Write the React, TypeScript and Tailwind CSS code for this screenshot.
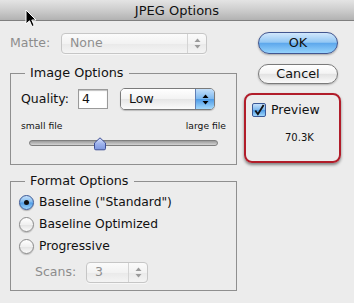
import React from 'react';

// small up/down stepper arrows used by popup menus
const Arrows = ({ color = '#000' }: { color?: string }) => (
    <svg width="7" height="11" viewBox="0 0 7 11">
        <path d="M3.5 0.5 L6.5 4 L0.5 4 Z" fill={color} />
        <path d="M3.5 10.5 L6.5 7 L0.5 7 Z" fill={color} />
    </svg>
);

const DisabledPopup = ({ value, width }: { value: string; width: string }) => (
    <div className={`${width} h-[21px] flex items-center rounded-[4px] border border-[#c6c6c6] bg-[linear-gradient(to_bottom,#fbfbfb_0%,#f2f2f2_50%,#e9e9e9_51%,#f4f4f4_100%)] shadow-[0_1px_0_rgba(255,255,255,0.6)]`}>
        <span className="flex-1 pl-[8px] text-[12.5px] leading-none text-[#8f8f8f]">{value}</span>
        <div className="w-[19px] h-full flex items-center justify-center border-l border-[#d4d4d4]">
            <Arrows color="#9a9a9a" />
        </div>
    </div>
);

const Radio = ({ checked, label }: { checked?: boolean; label: string }) => (
    <div className="h-[22px] flex items-center gap-[5px]">
        {checked ? (
            <div className="w-[15px] h-[15px] rounded-full border border-[#3a5896] bg-[linear-gradient(to_bottom,#c6e1fb_0%,#7db8ee_48%,#4e9be6_52%,#9fd6fb_100%)] flex items-center justify-center shadow-[0_1px_1px_rgba(0,0,0,0.25)]">
                <div className="w-[5px] h-[5px] rounded-full bg-[#111]" />
            </div>
        ) : (
            <div className="w-[15px] h-[15px] rounded-full border border-[#8a8a8a] bg-[linear-gradient(to_bottom,#ffffff_0%,#f0f0f0_50%,#e2e2e2_52%,#fbfbfb_100%)] shadow-[0_1px_1px_rgba(0,0,0,0.2)]" />
        )}
        <span className="text-[12.3px] leading-none text-[#111]">{label}</span>
    </div>
);

export default function App() {
    return (
        <div className="relative w-[354px] h-[303px] overflow-hidden bg-[#ececec] font-['DejaVu_Sans','Liberation_Sans',sans-serif] text-[#111]">
            {/* title bar */}
            <div className="h-[21px] flex items-center justify-center border-b border-[#7f7f7f] bg-[linear-gradient(to_bottom,#e4e4e4_0%,#cdcdcd_50%,#b2b2b2_100%)]">
                <span className="text-[13px] leading-none text-[#111]">JPEG Options</span>
            </div>

            <div className="flex">
                {/* left column */}
                <div className="w-[246px] pl-[10px]">
                    <div className="mt-[12px] h-[21px] flex items-center">
                        <span className="w-[51px] text-[12.5px] text-[#8c8c8c]">Matte:</span>
                        <DisabledPopup value="None" width="w-[146px]" />
                    </div>

                    <fieldset className="mt-[11px] w-[227px] border border-[#8f8f8f] px-[10px] pt-[7px] pb-[14px]">
                        <legend className="ml-[4px] px-[5px] text-[12.8px] leading-[16px]">Image Options</legend>
                        <div className="h-[22px] flex items-center">
                            <span className="w-[57px] text-[12.5px]">Quality:</span>
                            <div className="w-[30px] h-[20px] flex items-center pl-[3px] border border-[#9a9a9a] bg-white shadow-[inset_0_1px_1px_rgba(0,0,0,0.25)] text-[12.5px]">4</div>
                            <div className="ml-[12px] w-[95px] h-[22px] flex items-stretch rounded-[5px] border border-[#7a7a7a] overflow-hidden shadow-[0_1px_1px_rgba(0,0,0,0.2)]">
                                <div className="flex-1 flex items-center pl-[8px] text-[12.5px] bg-[linear-gradient(to_bottom,#ffffff_0%,#f3f3f3_50%,#e6e6e6_52%,#fbfbfb_100%)]">Low</div>
                                <div className="w-[19px] flex items-center justify-center border-l border-[#5f7fb6] bg-[linear-gradient(to_bottom,#c4e0fb_0%,#7fb9ef_48%,#4f9ce7_52%,#a4d9fc_100%)]">
                                    <Arrows />
                                </div>
                            </div>
                        </div>
                        <div className="mt-[10px] flex justify-between text-[9.2px] leading-[12px]">
                            <span>small file</span>
                            <span>large file</span>
                        </div>
                        <div className="relative mt-[4px] h-[14px] ml-[8px] w-[189px] flex items-center">
                            <div className="w-full h-[6px] rounded-full border border-[#7e7e7e] bg-[linear-gradient(to_bottom,#9a9a9a,#d4d4d4)]" />
                            <svg className="absolute left-[64px] top-[1px]" width="14" height="14" viewBox="0 0 14 14">
                                <defs>
                                    <linearGradient id="thumb" x1="0" y1="0" x2="0" y2="1">
                                        <stop offset="0" stopColor="#dfe6fb" />
                                        <stop offset="0.5" stopColor="#9db2ec" />
                                        <stop offset="1" stopColor="#7d97e0" />
                                    </linearGradient>
                                </defs>
                                <path d="M1.5 6 L7 0.8 L12.5 6 L12.5 11.5 Q12.5 12.8 11.2 12.8 L2.8 12.8 Q1.5 12.8 1.5 11.5 Z" fill="url(#thumb)" stroke="#3e4f95" strokeWidth="1" />
                            </svg>
                        </div>
                    </fieldset>

                    <fieldset className="mt-[8px] w-[227px] border border-[#8f8f8f] pl-[8px] pr-[10px] pt-[2px] pb-[8px]">
                        <legend className="ml-[6px] px-[5px] text-[12.8px] leading-[16px]">Format Options</legend>
                        <Radio checked label={'Baseline ("Standard")'} />
                        <Radio label="Baseline Optimized" />
                        <Radio label="Progressive" />
                        <div className="mt-[5px] pl-[16px] h-[20px] flex items-center">
                            <span className="w-[51px] text-[12.5px] text-[#8c8c8c]">Scans:</span>
                            <DisabledPopup value="3" width="w-[62px]" />
                        </div>
                    </fieldset>
                </div>

                {/* right column */}
                <div className="pl-[12px]">
                    <div className="mt-[11px] w-[80px] h-[22px] flex items-center justify-center rounded-full border border-[#42568f] bg-[linear-gradient(to_bottom,#d2e8fc_0%,#94c8f4_46%,#5ea8ec_52%,#95d3fc_100%)] shadow-[0_1px_2px_rgba(0,0,0,0.3)] text-[12.8px]">
                        OK
                    </div>
                    <div className="mt-[10px] w-[80px] h-[20px] flex items-center justify-center rounded-full border border-[#7a7a7a] bg-[linear-gradient(to_bottom,#ffffff_0%,#f4f4f4_46%,#e3e3e3_52%,#fafafa_100%)] shadow-[0_1px_2px_rgba(0,0,0,0.25)] text-[12.8px]">
                        Cancel
                    </div>
                    <div className="mt-[9px] ml-[-14px] w-[97px] h-[70px] rounded-[8px] border-2 border-[#b11d2a] shadow-[0_2px_3px_rgba(0,0,0,0.45)] pl-[6px] pt-[8px]">
                        <div className="flex items-center gap-[5px] h-[14px]">
                            <div className="w-[14px] h-[14px] rounded-[2px] border border-[#3a5896] bg-[linear-gradient(to_bottom,#c6e1fb_0%,#7db8ee_48%,#4e9be6_52%,#9fd6fb_100%)] flex items-center justify-center">
                                <svg width="13" height="13" viewBox="0 0 13 13">
                                    <path d="M2.5 6.5 L5.3 10.5 L11.5 0.5" fill="none" stroke="#111" strokeWidth="2" />
                                </svg>
                            </div>
                            <span className="text-[12.5px] leading-none">Preview</span>
                        </div>
                        <div className="mt-[15px] pl-[33px] text-[10px] leading-[12px]">70.3K</div>
                    </div>
                </div>
            </div>

            {/* mouse pointer */}
            <svg className="absolute left-[25px] top-[9px]" width="13" height="19" viewBox="0 0 13 19">
                <path d="M1 1 L1 15 L4.5 11.8 L7 17.5 L9.2 16.5 L6.8 11 L11 11 Z" fill="#000" stroke="#fff" strokeWidth="1" />
            </svg>
        </div>
    );
}
